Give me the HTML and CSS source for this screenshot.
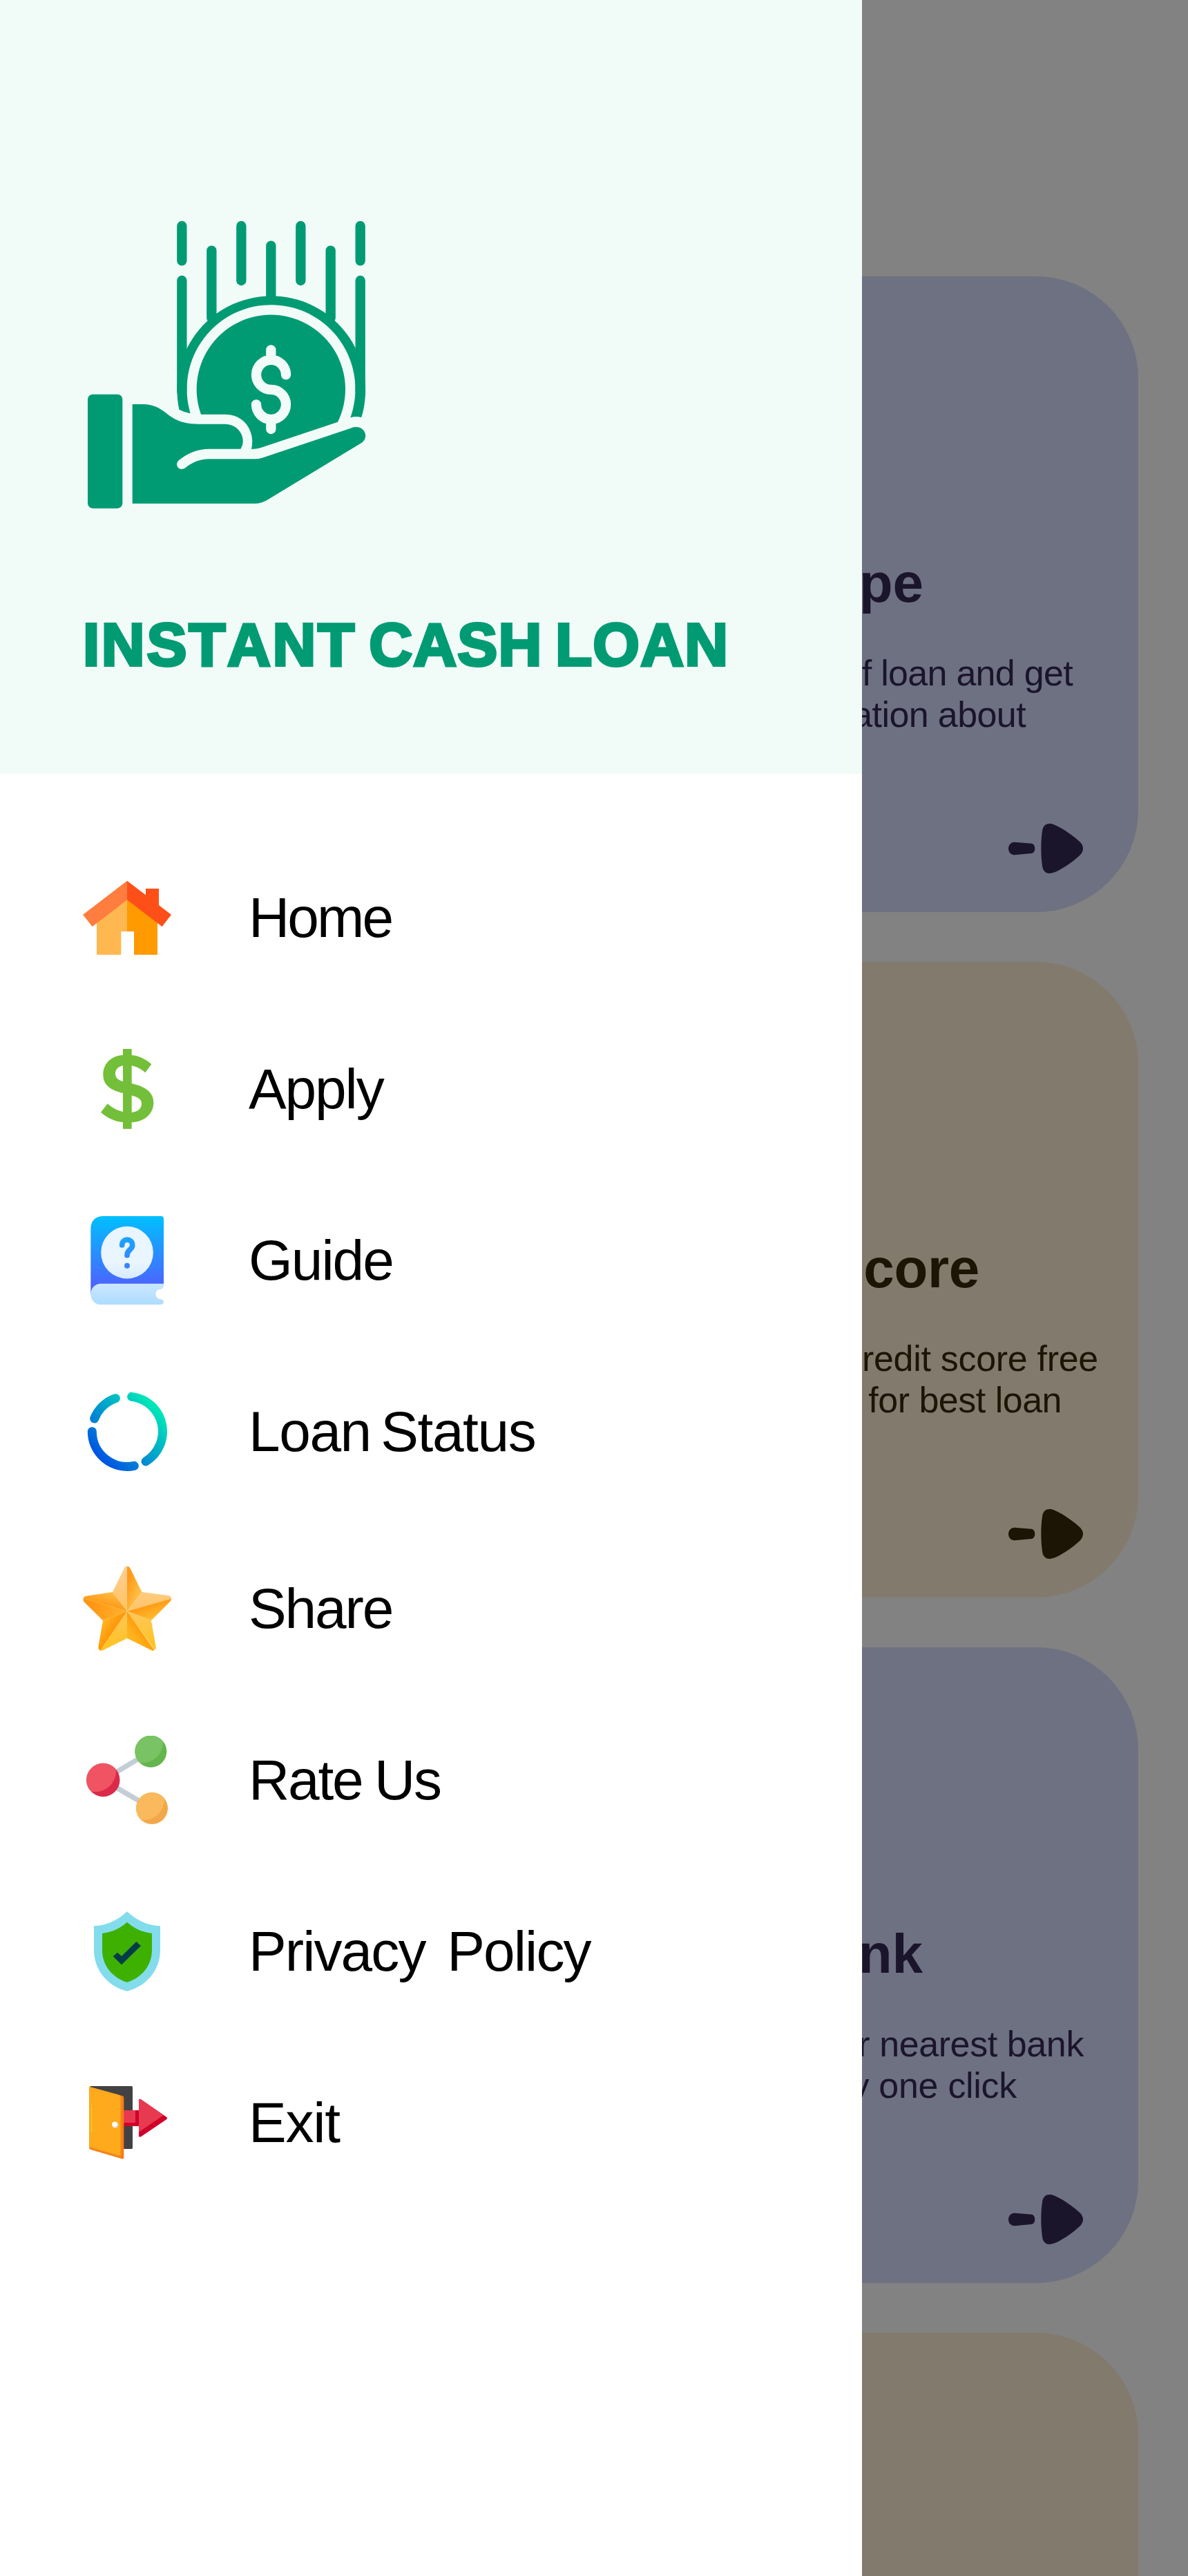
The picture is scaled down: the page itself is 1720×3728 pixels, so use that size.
FILE: index.html
```html
<!DOCTYPE html>
<html lang="en">
<head>
<meta charset="utf-8">
<title>Instant Cash Loan</title>
<link rel="stylesheet" href="styles.css">
</head>
<body>
<div class="screen">
  <aside class="drawer">
    <header class="brand">
      <svg class="brand-logo" viewBox="60 60 1248 1248" aria-hidden="true">
        <g fill="none" stroke="#009b73" stroke-width="43" stroke-linecap="round">
          <path d="M490 81V232M490 318V800M619 188V480M748 81V318M877 167V400M1006 81V318M1136 188V480M1265 81V232M1265 318V800"/>
        </g>
        <g fill="#009b73">
          <path d="M478 878A409 409 0 1 1 1270 912Q1245 906 1222 913A366 366 0 1 0 527 895Q500 890 478 878Z"/>
          <path d="M573 899A323 323 0 1 1 1167 932L830 1045Q812 1050 792 1050C810 970 760 899 677 899Z"/>
          <path d="M275 855H320C365 855 395 872 425 896C465 928 505 941 560 941H677C735 941 775 1000 745 1049H610C555 1049 515 1068 477 1098C455 1118 478 1150 505 1131C540 1104 570 1093 610 1093H805Q822 1093 838 1088L1235 955C1285 945 1305 1000 1270 1023L865 1268Q838 1286 805 1286H275Z"/>
          <rect x="81" y="812" width="151" height="495" rx="22"/>
        </g>
        <path fill="none" stroke="#f1fbf8" stroke-width="43" stroke-linecap="round" d="M942 727A64.5 64.5 0 1 0 877 791.5A64.5 64.5 0 1 1 813 856M877 619V655M877 925V963"/>
      </svg>
      <h1 class="brand-name"><span class="wide">INSTANT</span> CASH LOAN</h1>
    </header>
    <nav class="menu">
      <a class="menu-item home">
        <svg class="menu-icon" viewBox="60 42 384 384" aria-hidden="true">
          <path fill="#ffb74f" d="M252 150V294H226V395H120V250Z"/>
          <path fill="#ff9a00" d="M252 150V294H282V395H384V250Z"/>
          <path fill="#ff7d3e" d="M252 74V157L101 273L60 221Z"/>
          <path fill="#ff4f19" d="M252 74L333 136V108H390V180L444 221L404 273L252 157Z"/>
        </svg>
        <span class="menu-label">Home</span>
      </a>
      <a class="menu-item apply">
        <svg class="menu-icon" viewBox="60 786 384 384" aria-hidden="true">
          <path fill="#73bf39" fill-rule="evenodd" d="M358 870L331 907C312 890 290 880 272 877V954C335 968 367 995 367 1037C367 1085 328 1120 272 1123V1151H234V1122C195 1119 163 1101 138 1079L167 1042C190 1062 212 1072 234 1077V996C175 982 148 958 148 915C148 868 182 834 234 831V804H272V831C303 834 330 847 358 870ZM234 876C213 881 201 893 201 911C201 928 212 938 234 945ZM272 1006V1080C300 1077 315 1062 315 1042C315 1024 302 1015 272 1006Z"/>
        </svg>
        <span class="menu-label">Apply</span>
      </a>
      <a class="menu-item guide">
        <svg class="menu-icon" viewBox="60 60 384 384" aria-hidden="true">
          <defs>
            <linearGradient id="cover" x1="0" y1="0" x2="0" y2="1"><stop offset="0" stop-color="#00c0ff"/><stop offset="1" stop-color="#5558ff"/></linearGradient>
            <linearGradient id="pages" x1="0" y1="0" x2="0" y2="1"><stop offset="0" stop-color="#cbe7ff"/><stop offset="1" stop-color="#addcff"/></linearGradient>
            <linearGradient id="disc" x1="0" y1="0" x2="0" y2="1"><stop offset="0.7" stop-color="#e9f5ff"/><stop offset="1" stop-color="#d6ebff"/></linearGradient>
            <linearGradient id="ask" gradientUnits="userSpaceOnUse" x1="0" y1="150" x2="0" y2="290"><stop offset="0" stop-color="#1aa5ff"/><stop offset="1" stop-color="#3b7dff"/></linearGradient>
          </defs>
          <path fill="url(#cover)" d="M94 400V113Q96 64 145 60H400Q411 61 411 72V365H140L96 400Z"/>
          <path fill="url(#pages)" d="M137 353H411V364Q409 376 398 377A22 22 0 0 0 398 421Q411 423 411 433Q410 443 398 444H137C110 443 94 422 94 398C94 372 113 353 137 353Z"/>
          <circle cx="252" cy="218" r="113.500" fill="url(#disc)"/>
          <path fill="none" stroke="url(#ask)" stroke-width="23" stroke-linecap="round" d="M230 186C230 154 275 155 275 186C275 208 252 203 252 230"/>
          <circle cx="252" cy="275" r="12" fill="#3983ff"/>
        </svg>
        <span class="menu-label">Guide</span>
      </a>
      <a class="menu-item status">
        <svg class="menu-icon" viewBox="60 804 384 384" aria-hidden="true">
          <defs><linearGradient id="ring" gradientUnits="userSpaceOnUse" x1="140" y1="1115" x2="370" y2="885"><stop offset="0" stop-color="#0055e1"/><stop offset="1" stop-color="#00e6b8"/></linearGradient></defs>
          <path fill="none" stroke="url(#ring)" stroke-width="39" stroke-linecap="round" d="M272 844A152 152 0 0 1 333 1125M283 1144A152 152 0 0 1 100 995M110 939A152 152 0 0 1 202 851"/>
        </svg>
        <span class="menu-label">Loan Status</span>
      </a>
      <a class="menu-item share">
        <svg class="menu-icon" viewBox="30 42 384 384" aria-hidden="true">
          <defs>
            <clipPath id="star"><path d="M209 60Q214 50 222 50Q231 50 236 60L286 162L400 177Q414 179 414 191Q414 197 408 204L327 286L347 400Q347 418 330 417L222 363L114 416Q97 419 97 400L117 286L35 205Q24 184 44 179L159 162Z"/></clipPath>
            <linearGradient id="s1" x1="0" y1="0" x2="0" y2="1"><stop offset="0" stop-color="#ffcd9a"/><stop offset="1" stop-color="#ffc561"/></linearGradient>
            <linearGradient id="s2" gradientUnits="userSpaceOnUse" x1="222" y1="130" x2="275" y2="150"><stop offset="0" stop-color="#ff9b18"/><stop offset="1" stop-color="#ffbc43"/></linearGradient>
            <linearGradient id="s3" x1="0" y1="0" x2="0" y2="1"><stop offset="0" stop-color="#ffcc80"/><stop offset="1" stop-color="#ffc364"/></linearGradient>
            <linearGradient id="s4" gradientUnits="userSpaceOnUse" x1="315" y1="215" x2="335" y2="275"><stop offset="0" stop-color="#ff9913"/><stop offset="1" stop-color="#ffbb2e"/></linearGradient>
            <linearGradient id="s5" gradientUnits="userSpaceOnUse" x1="0" y1="245" x2="0" y2="417"><stop offset="0" stop-color="#ffc65c"/><stop offset="1" stop-color="#ffc31c"/></linearGradient>
            <linearGradient id="s6" gradientUnits="userSpaceOnUse" x1="285" y1="320" x2="240" y2="355"><stop offset="0" stop-color="#ff9a08"/><stop offset="1" stop-color="#ffb51f"/></linearGradient>
            <linearGradient id="s7" gradientUnits="userSpaceOnUse" x1="165" y1="325" x2="120" y2="295"><stop offset="0" stop-color="#ff970a"/><stop offset="1" stop-color="#ffb220"/></linearGradient>
            <linearGradient id="s8" gradientUnits="userSpaceOnUse" x1="60" y1="210" x2="190" y2="260"><stop offset="0" stop-color="#ff9312"/><stop offset="1" stop-color="#ffae28"/></linearGradient>
            <linearGradient id="s9" gradientUnits="userSpaceOnUse" x1="120" y1="220" x2="135" y2="165"><stop offset="0" stop-color="#ff9914"/><stop offset="1" stop-color="#ffb840"/></linearGradient>
          </defs>
          <g clip-path="url(#star)">
            <path fill="url(#s1)" d="M222 245V30L190 40L159 162Z"/>
            <path fill="url(#s2)" d="M222 245V30L250 40L286 162Z"/>
            <path fill="url(#s3)" d="M222 245L286 162L430 160V186Z"/>
            <path fill="url(#s4)" d="M222 245L430 186L327 286Z"/>
            <path fill="url(#s5)" d="M222 245L327 286L360 420L343 415Z"/>
            <path fill="url(#s6)" d="M222 245L348 425L222 363Z"/>
            <path fill="url(#s5)" d="M222 245L100 420L140 425L222 363Z"/>
            <path fill="url(#s7)" d="M222 245L98 425L80 410L117 286Z"/>
            <path fill="url(#s8)" d="M222 245L10 183V220L117 286Z"/>
            <path fill="url(#s9)" d="M222 245L10 183V160L159 162Z"/>
          </g>
        </svg>
        <span class="menu-label">Share</span>
      </a>
      <a class="menu-item rate">
        <svg class="menu-icon" viewBox="60 816 384 384" aria-hidden="true">
          <defs>
            <clipPath id="dot-green"><circle cx="355" cy="884" r="69"/></clipPath>
            <clipPath id="dot-red"><circle cx="148" cy="1008" r="72.500"/></clipPath>
            <clipPath id="dot-orange"><circle cx="360" cy="1131" r="69"/></clipPath>
          </defs>
          <path fill="none" stroke="#c3ced5" stroke-width="22" d="M355 884L148 1008L360 1131"/>
          <g clip-path="url(#dot-green)"><rect x="280" y="810" width="150" height="150" fill="#65b54e"/><circle cx="319" cy="846" r="88" fill="#7ac364"/></g>
          <g clip-path="url(#dot-red)"><rect x="70" y="930" width="160" height="160" fill="#db2a49"/><circle cx="113" cy="969" r="91" fill="#f05462"/></g>
          <g clip-path="url(#dot-orange)"><rect x="285" y="1055" width="150" height="150" fill="#f2a84a"/><circle cx="325" cy="1094" r="88" fill="#fab95c"/></g>
        </svg>
        <span class="menu-label">Rate Us</span>
      </a>
      <a class="menu-item privacy">
        <svg class="menu-icon" viewBox="60 60 384 384" aria-hidden="true">
          <path fill="#83dcec" d="M252 79C292 117 340 140 396 142V245C396 330 340 402 252 425C164 402 108 330 108 245V142C164 140 212 117 252 79Z"/>
          <path fill="#3eb000" d="M252 125C282 152 318 169 360 174V245C360 315 315 366 252 386C189 366 144 315 144 245V174C186 169 222 152 252 125Z"/>
          <path fill="#003c49" d="M210 257L228 273L292 210L312 228L228 310L191 274Z"/>
        </svg>
        <span class="menu-label">Privacy&nbsp; Policy</span>
      </a>
      <a class="menu-item exit">
        <svg class="menu-icon" viewBox="30 24 384 384" aria-hidden="true">
          <rect x="60" y="57" width="186" height="273" rx="5" fill="#424244"/>
          <path fill="#d1002a" d="M200 162H273V231H200Z"/>
          <path fill="#e7394f" d="M200 162H258V216H200Z"/>
          <path fill="#d1002a" d="M273 118Q275 111 282 115L394 192Q398 196 394 201L282 277Q274 281 273 273Z"/>
          <path fill="#e7394f" d="M273 118Q275 111 282 115L381 183L273 257Z"/>
          <path fill="#f47d17" d="M58 60L203 100Q208 102 208 107V368Q207 374 200 373L63 332Q58 330 58 326Z"/>
          <path fill="#fa9119" d="M58 60L190 97L197 104V360L190 363L58 325Z"/>
          <path fill="#ffa91c" d="M58 60L186 95Q192 98 192 104V351Q191 358 184 357L58 320Z"/>
          <path stroke="#ffc61c" stroke-width="6" stroke-linecap="round" d="M68 151V256M68 139V140"/>
          <circle cx="170" cy="225" r="13.500" fill="#e0e6ec"/>
          <circle cx="167" cy="222" r="10" fill="#fff"/>
        </svg>
        <span class="menu-label">Exit</span>
      </a>
    </nav>
  </aside>
  <main class="content">
    <section class="card blue type">
      <h2 class="card-title">Type</h2>
      <p class="card-text"><span class="line first">of loan and get</span><span class="line second">information about</span></p>
      <svg class="card-arrow" viewBox="60 66 324 216" aria-hidden="true"><path d="M87 146L160 152C180 154 180 193 160 195L87 202C51 202 51 146 87 146ZM239 66C270 66 350 123 373 148Q384 160 384 174Q384 188 373 200C350 225 270 282 239 282C223 282 211 272 208 255C200 210 200 135 208 93C211 76 223 66 239 66Z"/></svg>
    </section>
    <section class="card tan score">
      <h2 class="card-title">Score</h2>
      <p class="card-text"><span class="line first">credit score free</span><span class="line second">for best loan</span></p>
      <svg class="card-arrow" viewBox="60 66 324 216" aria-hidden="true"><path d="M87 146L160 152C180 154 180 193 160 195L87 202C51 202 51 146 87 146ZM239 66C270 66 350 123 373 148Q384 160 384 174Q384 188 373 200C350 225 270 282 239 282C223 282 211 272 208 255C200 210 200 135 208 93C211 76 223 66 239 66Z"/></svg>
    </section>
    <section class="card blue bank">
      <h2 class="card-title">Bank</h2>
      <p class="card-text"><span class="line first">your nearest bank</span><span class="line second">by one click</span></p>
      <svg class="card-arrow" viewBox="60 66 324 216" aria-hidden="true"><path d="M87 146L160 152C180 154 180 193 160 195L87 202C51 202 51 146 87 146ZM239 66C270 66 350 123 373 148Q384 160 384 174Q384 188 373 200C350 225 270 282 239 282C223 282 211 272 208 255C200 210 200 135 208 93C211 76 223 66 239 66Z"/></svg>
    </section>
    <section class="card tan"></section>
  </main>
</div>
</body>
</html>
```
FILE: styles.css
```css
* { box-sizing: border-box; }

body {
  margin: 0;
  font-family: "Liberation Sans", Arial, sans-serif;
}

.screen {
  display: flex;
  width: 1720px;
  height: 3728px;
  overflow: hidden;
  background: #828282;
}

/* Navigation drawer */
.drawer {
  flex: none;
  width: 1248px;
  background: #fff;
}

.brand {
  height: 1120px;
  padding: 320px 0 0 120px;
  background: #f1fbf8;
}

.brand-logo {
  display: block;
  width: 416px;
  height: 416px;
}

.brand-name {
  margin: 147px 0 0;
  font-size: 87px;
  line-height: 100px;
  font-weight: 700;
  letter-spacing: 1.2px;
  word-spacing: -7px;
  white-space: nowrap;
  color: #009b73;
  -webkit-text-stroke: 4px #009b73;
}

.wide {
  font-kerning: none;
  letter-spacing: 2.7px;
}

.menu {
  display: flex;
  flex-direction: column;
  gap: 120px;
  padding: 144px 0 0 120px;
}

.menu-item {
  display: flex;
  align-items: center;
  gap: 112px;
  height: 128px;
}

.menu-icon {
  width: 128px;
  height: 128px;
}

.menu-label {
  font-size: 82px;
  line-height: 128px;
  white-space: nowrap;
  color: #000;
}

.home { letter-spacing: -2.9px; }
.apply { letter-spacing: -2.1px; }
.guide { letter-spacing: -2px; }
.status { letter-spacing: -1.4px; word-spacing: -7px; margin-bottom: 8px; }
.share { letter-spacing: -2.1px; }
.rate { letter-spacing: -2.2px; word-spacing: -3px; }
.privacy { letter-spacing: -1.9px; word-spacing: -5px; }
.exit { letter-spacing: -1.2px; }

/* Dimmed page behind the drawer */
.content {
  display: flex;
  flex: 1;
  flex-direction: column;
  gap: 72px;
  padding: 400px 72px 0 0;
  overflow: hidden;
}

.card {
  display: flex;
  flex: none;
  flex-direction: column;
  align-items: flex-end;
  height: 920px;
  padding-top: 398px;
  border-radius: 0 148px 148px 0;
}

.blue { background: #6e7181; color: #1b152c; fill: #1b152c; }
.tan { background: #837a6e; color: #1c1405; fill: #1c1405; }

.card-title {
  margin: 0;
  font-size: 80px;
  line-height: 92px;
  font-weight: 700;
}

.card-text {
  display: flex;
  flex-direction: column;
  align-items: flex-end;
  margin: 54px 0 0;
  font-size: 52px;
  line-height: 60px;
}

.line { white-space: nowrap; }

.card-arrow {
  width: 108px;
  height: 72px;
  margin: 128px 80px 0 0;
}

.type .card-title { margin-right: 311px; }
.type .first { margin-right: 95px; letter-spacing: -0.7px; }
.type .second { margin-right: 163px; letter-spacing: -0.6px; }
.score .card-title { margin-right: 230px; letter-spacing: -0.3px; }
.score .first { margin-right: 58px; letter-spacing: -0.3px; }
.score .second { margin-right: 111px; letter-spacing: -0.5px; }
.bank .card-title { margin-right: 312px; }
.bank .first { margin-right: 79px; letter-spacing: -0.4px; }
.bank .second { margin-right: 176px; letter-spacing: -0.3px; }
```
